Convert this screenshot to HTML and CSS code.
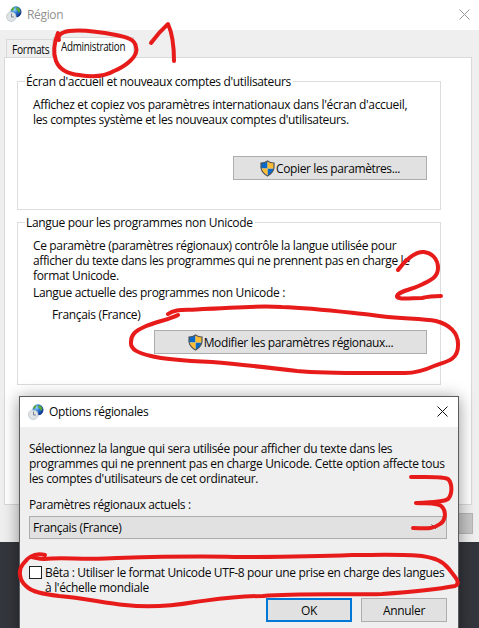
FILE: index.html
```html
<!DOCTYPE html>
<html lang="fr">
<head>
<meta charset="utf-8">
<title>Région</title>
<link rel="stylesheet" href="styles.css">
</head>
<body>
<svg class="defs" width="0" height="0">
  <defs>
    <radialGradient id="sea" cx=".35" cy=".3" r=".75"><stop offset="0" stop-color="#9bd8fa"/><stop offset=".45" stop-color="#2878d2"/><stop offset="1" stop-color="#092985"/></radialGradient>
    <clipPath id="crest"><path d="M7.5 1.2Q10 3 14 3V8Q13 13 7.5 16Q2 13 1 8V3Q5 3 7.5 1.2Z"/></clipPath>
  </defs>
  <symbol id="globe" viewBox="0 0 16 16">
    <circle cx="10" cy="5.8" r="5.5" fill="url(#sea)"/>
    <path d="M5 4Q6 1 8.5 .8L8 3 6.5 5ZM11 1Q14 2 14.5 5L13 7 11.5 4.5 10 3Z" fill="#5ba832"/>
    <circle cx="5.3" cy="10.7" r="4.8" fill="#dfe3e6" stroke="#b4bfc6" stroke-width=".7"/>
    <path d="M5.5 7.5v3.5H8" fill="none" stroke="#6f7e89" stroke-width=".9"/>
  </symbol>
  <symbol id="shield" viewBox="0 0 15 17">
    <g clip-path="url(#crest)"><path d="M0 0h7.5v8.5H0zM7.5 8.5H15V17H7.5z" fill="#0869c9"/><path d="M7.5 0H15v8.5H7.5zM0 8.5h7.5V17H0z" fill="#ffbd36"/></g>
    <path d="M7.5 1Q10 3 14 3V8Q13 13 7.5 16Q2 13 1 8V3Q5 3 7.5 1Z" fill="none" stroke="#50545a" stroke-width="1.2"/>
  </symbol>
</svg>
<main class="desktop">
  <section class="window">
    <header class="titlebar"><svg class="globe"><use href="#globe"/></svg><h1>Région</h1>
      <svg class="close" viewBox="0 0 11 11"><path d="M.5.5l10 10M10.5.5l-10 10"/></svg></header>
    <nav class="tabs"><div class="tab"><span>Formats</span></div><div class="tab active"><span>Administration</span></div></nav>
    <div class="panel">
      <fieldset class="group welcome"><legend>Écran d'accueil et nouveaux comptes d'utilisateurs</legend>
        <p><span>Affichez et copiez vos paramètres internationaux dans l'écran d'accueil,</span><span class="tighter">les comptes système et les nouveaux comptes d'utilisateurs.</span></p>
        <button class="copy"><svg class="shield"><use href="#shield"/></svg><span class="tightest">Copier les paramètres...</span></button>
      </fieldset>
      <fieldset class="group locale"><legend>Langue pour les programmes non Unicode</legend>
        <p><span class="tighter">Ce paramètre (paramètres régionaux) contrôle la langue utilisée pour</span><span class="tightest">afficher du texte dans les programmes qui ne prennent pas en charge le</span><span>format Unicode.</span></p>
        <p class="current"><span>Langue actuelle des programmes non Unicode :</span></p>
        <p class="value"><span>Français (France)</span></p>
        <button class="modify"><svg class="shield"><use href="#shield"/></svg><span class="tighter">Modifier les paramètres régionaux...</span></button>
      </fieldset>
    </div>
    <div class="apply"></div>
  </section>
  <section class="dialog">
    <header class="titlebar"><svg class="globe"><use href="#globe"/></svg><h2>Options régionales</h2>
      <svg class="close" viewBox="0 0 11 11"><path d="M.5.5l10 10M10.5.5l-10 10"/></svg></header>
    <div class="content">
      <p><span class="tighter">Sélectionnez la langue qui sera utilisée pour afficher du texte dans les</span><span>programmes qui ne prennent pas en charge Unicode. Cette option affecte tous</span><span class="tighter">les comptes d'utilisateurs de cet ordinateur.</span></p>
      <p class="label"><span class="tightest">Paramètres régionaux actuels :</span></p>
      <div class="select"><span>Français (France)</span><svg width="9" height="6" viewBox="0 0 9 6"><path d="M.5.5l4 4 4-4" fill="none" stroke="#444"/></svg></div>
      <label class="beta"><i class="box"></i><p><span class="tighter">Bêta : Utiliser le format Unicode UTF-8 pour une prise en charge des langues</span><span>à l'échelle mondiale</span></p></label>
      <div class="actions"><button class="ok">OK</button><button>Annuler</button></div>
    </div>
  </section>
  <svg class="marks" viewBox="0 0 479 628">
    <path d="M58 33C54 43 53 53 56 61C60 71 69 74 79 75C91 77 104 77 114 71C126 66 139 56 136 47C135 39 126 37 116 35C101 32 84 29 69 31C61 32 57 36 59 40"/>
    <path d="M151 43Q159 32 168 24Q174 37 174 61"/>
    <path d="M398 270C405 260 416 251 424 252C432 253 438 259 438 268C438 277 431 280 423 284C414 289 399 291 397 296C396 300 411 298 422 298C430 296 435 296 441 296"/>
    <path d="M168 314C176 308 187 311 203 309C226 309 250 305 282 307C314 308 343 312 372 315C397 319 421 318 436 321C448 324 459 332 458 346C458 361 444 362 434 366C423 371 416 373 405 373C363 373 330 374 297 371C263 367 236 364 212 362C188 361 167 360 151 356C139 353 130 350 131 342C131 335 135 331 144 327C155 322 171 319 178 315"/>
    <path d="M411 477C426 477 443 476 448 479C453 484 452 495 448 499C442 503 426 502 416 503C427 504 440 502 443 508C447 514 444 522 440 524C432 530 424 528 413 528"/>
    <path d="M45 555C34 552 28 557 23 564C18 570 19 580 26 586C32 592 43 594 59 596C84 598 104 603 125 605C151 608 172 606 195 602C218 599 235 596 263 596C300 593 345 595 382 594C410 592 439 589 455 586C462 583 454 576 449 569C443 561 435 558 422 556C405 554 376 555 352 555C304 557 269 557 234 557C196 556 153 557 117 558C84 560 62 557 44 559C38 559 34 557 31 557"/>
  </svg>
</main>
</body>
</html>
```
FILE: styles.css
```css
* { box-sizing: border-box; }
body { margin: 0; overflow: hidden; font: 12px/15px "Open Sans", "Noto Sans", sans-serif; letter-spacing: -.33px; color: #080808; }
h1, h2, p { margin: 0; font-size: 12px; font-weight: 400; }
p > span { display: block; width: max-content; }
span, legend, h1, h2 { white-space: nowrap; }
.tighter { letter-spacing: -.355px; }
.tightest { letter-spacing: -.38px; }
.defs { position: absolute; }
.desktop { position: relative; width: 479px; height: 628px; overflow: hidden; background: #33363c; }
.window { position: relative; width: 479px; height: 542px; background: #efefef; }
.titlebar { display: flex; align-items: center; height: 30px; padding: 0 9px 2px 6px; background: #fff; }
.globe { width: 16px; height: 16px; margin-right: 5px; }
.close { width: 11px; height: 11px; margin-left: auto; fill: none; stroke: #999; }
.window h1 { color: #929292; }
.tabs { display: flex; align-items: flex-end; height: 27px; padding-left: 6px; }
.tab { height: 18px; padding-left: 5px; width: 47px; border: 1px solid #d9d9d9; border-bottom: 0; line-height: 19px; }
.tab span { display: inline-block; transform: scaleX(.85); transform-origin: left; }
.tab.active span { transform: scaleX(.82); }
.tab.active { position: relative; height: 21px; width: 81px; margin-bottom: -1px; padding-left: 7px; line-height: 18px; background: #fff; }
.panel { display: flex; flex-direction: column; gap: 12px; width: 468px; height: 448px; margin-left: 4px; padding: 16px 0 0 12px; border: 1px solid #d9d9d9; background: #fff; }
.group { width: 424px; min-width: 0; margin: 0; border: 1px solid #dcdcdc; padding: 8px 13px 0 15px; }
.welcome { height: 136px; }
.locale { height: 170px; margin-top: -7px; }
legend { margin-left: -8px; padding: 0 2px 0 1px; }
button { display: flex; align-items: center; justify-content: center; height: 24px; padding: 0; border: 1px solid #adadad; background: #e1e1e1; color: #080808; font: inherit; letter-spacing: inherit; }
.shield { width: 15px; height: 17px; margin-right: 1px; }
.copy { width: 194px; margin: 29px 0 0 auto; }
.modify { width: 273px; margin: 8px 0 0 auto; }
.current { margin-top: 2px; }
.value { margin: 7px 0 0 19px; }
.apply { width: 60px; height: 21px; margin: 8px 0 0 413px; border: 1px solid #b5b5b5; background: #c7c7c7; }
.dialog { position: absolute; left: 19px; top: 396px; width: 440px; height: 240px; border: 1px solid #5c5c5c; background: #efefef; box-shadow: 0 2px 15px rgba(0,0,0,.42); }
.dialog .titlebar { padding: 0 10px 1px 8px; }
.dialog .close { stroke: #111; }
.content { padding: 14px 11px 0 9px; }
.label { margin-top: 11px; }
.select { display: flex; align-items: center; justify-content: space-between; height: 23px; margin-top: 4px; padding: 0 6px 1px 3px; border: 1px solid #adadad; background: #e1e1e1; }
.beta { display: flex; gap: 3px; margin-top: 26px; }
.box { width: 13px; height: 13px; flex: none; margin-top: 1px; border: 1px solid #222; background: #fff; }
.actions { display: flex; justify-content: flex-end; gap: 9px; margin-top: 3px; }
.actions button { width: 86px; height: 24px; }
.actions .ok { border: 2px solid #0078d7; }
.marks { position: absolute; inset: 0; width: 479px; height: 628px; fill: none; stroke: #e81b1b; stroke-width: 4; stroke-linecap: round; stroke-linejoin: round; }
```
